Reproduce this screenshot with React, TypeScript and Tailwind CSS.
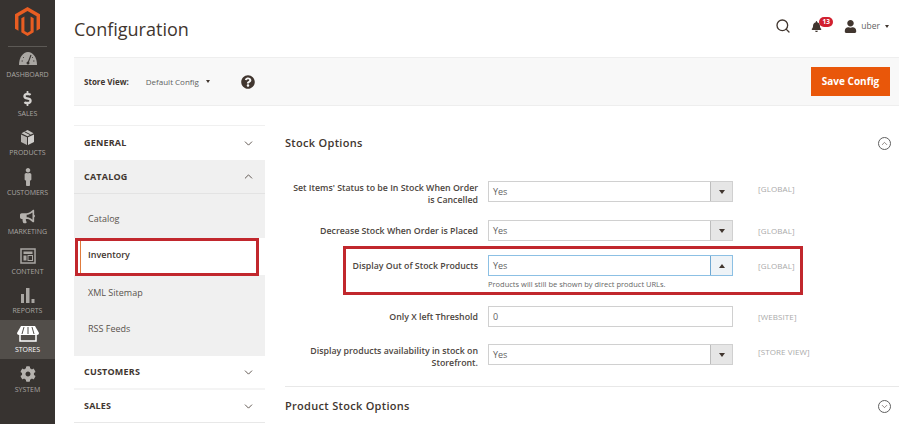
import { ChevronDown, ChevronUp, Search } from 'lucide-react'
import { FaBullhorn, FaCog, FaQuestionCircle, FaBell, FaUser, FaDollarSign, FaMale } from 'react-icons/fa'
import type { ReactNode } from 'react'

function Logo() {
  return (
    <svg width="25" height="29" viewBox="0 0 26 30" className="text-[#e85d22]">
      <path fill="currentColor" d="M13 0 26 7.5v15l-3.6 2.1V9.6L13 4.2 3.6 9.6v15L0 22.500V7.500Z" />
      <path fill="currentColor" d="M13 8 19.400 11.700v14.600L13 30 6.600 26.300V11.700l3.200-1.800v15l3.200 1.900 3.200-1.900v-15Z" />
    </svg>
  )
}

function GaugeIcon() {
  return (
    <svg width="18" height="13" viewBox="0 0 18 13">
      <path fill="#a9a6a2" d="M0 13C0 5.500 4 0 9 0s9 5.500 9 13Z" />
      <path stroke="#373330" strokeWidth="1.200" d="M9 11 12 3" />
      <circle cx="9" cy="11" r="1.500" fill="#373330" />
      <path stroke="#373330" strokeWidth="0.800" d="M4 5l1 1M2.500 9h1.500M14 5l-1 1M15.500 9H14" />
    </svg>
  )
}

function BoxIcon() {
  return (
    <svg width="15" height="15" viewBox="0 0 15 15">
      <path fill="#b5b2ae" d="M7 7.200v7.800L1 12V4.500Z" />
      <path fill="#d0cecb" d="M8 7.200v7.800l6-3V4.500Z" />
      <path fill="#c4c2be" d="M7.500 0 13.500 3.200 7.500 6.300 1.500 3.200Z" />
      <path stroke="#373330" strokeWidth="1" d="M4.500 1.700 10.500 4.800" />
    </svg>
  )
}

function ContentIcon() {
  return (
    <svg width="16" height="16" viewBox="0 0 16 16" fill="none" stroke="#a9a6a2">
      <rect x="1" y="1" width="14" height="14" strokeWidth="1.500" />
      <rect x="3.500" y="3.500" width="9" height="2.500" fill="#a9a6a2" stroke="none" />
      <rect x="3.500" y="7.500" width="3" height="5" fill="#a9a6a2" stroke="none" />
      <rect x="8" y="7.500" width="4.500" height="5" strokeWidth="1" />
    </svg>
  )
}

function ReportsIcon() {
  return (
    <svg width="15" height="15" viewBox="0 0 15 15" fill="#a9a6a2">
      <rect x="1" y="6" width="3" height="9" />
      <rect x="6" y="0" width="3.500" height="15" />
      <rect x="11.500" y="11" width="3" height="4" />
    </svg>
  )
}

function StoreIcon() {
  return (
    <svg width="22" height="16" viewBox="0 0 22 16">
      <path fill="#fff" d="M4 0h14l4 7c0 1.200-1 2-2 2H2C1 9 0 8.200 0 7Z" />
      <path stroke="#53504c" strokeWidth="1" d="M7 1 5 8M11 1v7M15 1l2 7" />
      <path fill="none" stroke="#fff" strokeWidth="1.500" d="M3 9v6h16V9" />
    </svg>
  )
}

function NavItem({ icon, label, active, iconClass }: { icon: ReactNode; label: string; active?: boolean; iconClass: string }) {
  return (
    <div className={`flex h-[39.400px] flex-col items-center justify-center ${active ? 'bg-[#524e4a] text-white' : 'text-[#a9a6a2]'}`}>
      <div className={`flex h-[20px] items-center justify-center ${iconClass}`}>{icon}</div>
      <span className="mt-[1px] text-[7px] leading-[9px] uppercase">{label}</span>
    </div>
  )
}

function Sidebar() {
  return (
    <div className="flex h-[424px] w-[55px] shrink-0 flex-col bg-[#373330]">
      <div className="flex h-[46px] items-start justify-center pt-[7px]">
        <Logo />
      </div>
      <div className="mx-[8px] h-px bg-[#5c5955]" />
      <div className="-mt-[3px]">
        <NavItem icon={<GaugeIcon />} label="Dashboard" iconClass="" />
        <NavItem icon={<FaDollarSign size={15} />} label="Sales" iconClass="text-[#d4d2cf]" />
        <NavItem icon={<BoxIcon />} label="Products" iconClass="" />
        <NavItem icon={<FaMale size={18} />} label="Customers" iconClass="text-[#b5b2ae]" />
        <NavItem icon={<FaBullhorn size={15} />} label="Marketing" iconClass="text-[#b5b2ae]" />
        <NavItem icon={<ContentIcon />} label="Content" iconClass="" />
        <NavItem icon={<ReportsIcon />} label="Reports" iconClass="" />
        <NavItem icon={<StoreIcon />} label="Stores" iconClass="" active />
        <NavItem icon={<FaCog size={16} />} label="System" iconClass="text-[#b5b2ae]" />
      </div>
    </div>
  )
}

function SectionRow({ label, open, className }: { label: string; open?: boolean; className: string }) {
  return (
    <div className={`flex items-center justify-between pr-[10px] pl-[10px] ${className}`}>
      <span className="text-[9px] font-bold tracking-[0.2px] text-[#41362f] uppercase">{label}</span>
      {open ? <ChevronUp size={13} strokeWidth={1.500} className="text-[#41362f]" /> : <ChevronDown size={13} strokeWidth={1.500} className="text-[#41362f]" />}
    </div>
  )
}

function ConfigNav() {
  return (
    <div className="relative w-[191px] shrink-0 border-t border-[#f0f0f0]">
      <SectionRow label="General" className="h-[34px] bg-white" />
      <SectionRow label="Catalog" open className="h-[34px] border-b border-[#e3e3e3] bg-[#f0f0f0]" />
      <div className="bg-[#f0f0f0] pb-[8px] text-[9px] text-[#5a534e]">
        <div className="flex h-[44px] items-center pt-[5px] pl-[14px]">Catalog</div>
        <div className="flex h-[37px] items-center bg-white pb-[3px] pl-[14px] font-semibold text-[#41362f]">Inventory</div>
        <div className="flex h-[36px] items-center pl-[14px]">XML Sitemap</div>
        <div className="flex h-[37px] items-center pb-[2px] pl-[14px]">RSS Feeds</div>
      </div>
      <SectionRow label="Customers" className="h-[34px] border-b-2 border-[#f4f4f4] bg-white" />
      <SectionRow label="Sales" className="h-[33px] border-b border-[#e8e8e8] bg-white" />
      {/* annotation drawn on the screenshot */}
      <div className="absolute top-[112px] left-[1px] h-[38px] w-[184px] border-[3px] border-[#c1272d]">
        <div className="ml-[2px] h-full w-[1px] bg-[#e07b3c]" />
      </div>
    </div>
  )
}

function Select({ value, focused }: { value: string; focused?: boolean }) {
  return (
    <div className={`flex h-[21px] w-[245px] border bg-white ${focused ? 'border-[#8cc0e4]' : 'border-[#d0d0d0]'}`}>
      <span className="flex-1 pl-[4px] text-[9px] leading-[20px] text-[#5f5f5f]">{value}</span>
      <span className={`flex w-[22px] items-center justify-center border-l ${focused ? 'border-[#6fa8d2] bg-[#eef3f7]' : 'border-[#bdbdbd] bg-[#e6e6e6]'}`}>
        <span className={`h-0 w-0 border-x-[3px] border-x-transparent ${focused ? 'border-b-[4px] border-b-[#41362f]' : 'border-t-[4px] border-t-[#41362f]'}`} />
      </span>
    </div>
  )
}

function FormRow({ label, scope, control, className, hint, tall }: { label: ReactNode; scope: string; control: ReactNode; className: string; hint?: string; tall?: boolean }) {
  return (
    <div className={`flex items-start ${className}`}>
      <div className={`w-[193px] shrink-0 text-right text-[8.800px] leading-[12px] font-semibold text-[#4d4641] ${tall ? 'pt-[1px]' : 'pt-[5px]'}`}>{label}</div>
      <div className="ml-[10px] w-[245px] shrink-0">
        {control}
        {hint && <div className="mt-[3px] text-[7.500px] leading-[10px] text-[#666]">{hint}</div>}
      </div>
      <div className={`ml-[25px] text-[8px] leading-[10px] tracking-[0.1px] text-[#aaaaaa] uppercase ${tall ? 'pt-[3px]' : 'pt-[6px]'}`}>{scope}</div>
    </div>
  )
}

export default function App() {
  return (
    <div className="flex h-[424px] w-[918px] overflow-hidden bg-white font-['Open_Sans',sans-serif]">
      <Sidebar />
      <div className="w-[844px] pl-[19px]">
        <div className="flex h-[57px] items-start justify-between">
          <h1 className="mt-[15px] text-[18px] leading-[28px] text-[#41362f]">Configuration</h1>
          <div className="mt-[18px] mr-[10px] flex items-center text-[#41362f]">
            <Search size={16} strokeWidth={2} />
            <div className="relative ml-[20px]">
              <FaBell size={11} />
              <span className="absolute -top-[4px] left-[8px] flex h-[10px] w-[14px] items-center justify-center rounded-full bg-[#d1202f] text-[6.500px] font-bold text-white">13</span>
            </div>
            <FaUser size={13} className="ml-[22px]" />
            <span className="ml-[4px] text-[8.500px] text-[#5f5f5f]">uber</span>
            <span className="ml-[5px] h-0 w-0 border-x-[2.500px] border-t-[3px] border-x-transparent border-t-[#41362f]" />
          </div>
        </div>

        <div className="flex h-[49px] w-[825px] items-center border-y border-[#eeeeee] bg-[#f8f8f8] pr-[9px] pl-[10px]">
          <span className="text-[8px] font-bold text-[#41362f]">Store View:</span>
          <span className="ml-[17px] text-[8px] text-[#5f5f5f]">Default Config</span>
          <span className="ml-[7px] h-0 w-0 border-x-[2.500px] border-t-[3px] border-x-transparent border-t-[#41362f]" />
          <FaQuestionCircle size={14} className="ml-[31px] text-[#41362f]" />
          <button className="ml-auto h-[29px] w-[79px] bg-[#e9570a] text-[10px] font-bold text-white">Save Config</button>
        </div>

        <div className="mt-[19px] flex">
          <ConfigNav />
          <div className="relative ml-[20px] w-[614px]">
            <div className="flex h-[37px] items-center justify-between pr-[8px]">
              <h2 className="text-[11px] font-semibold tracking-[0.3px] text-[#41362f]">Stock Options</h2>
              <span className="flex h-[13px] w-[13px] items-center justify-center rounded-full border border-[#5f5f5f]">
                <ChevronUp size={9} strokeWidth={1.500} className="text-[#41362f]" />
              </span>
            </div>
            <FormRow tall className="mt-[19px]" label={<>Set Items' Status to be In Stock When Order<br />is Cancelled</>} scope="[Global]" control={<Select value="Yes" />} />
            <FormRow className="mt-[14px]" label="Decrease Stock When Order is Placed" scope="[Global]" control={<Select value="Yes" />} />
            <FormRow className="mt-[14px]" label="Display Out of Stock Products" scope="[Global]" control={<Select value="Yes" focused />} hint="Products will still be shown by direct product URLs." />
            <FormRow className="mt-[17px]" label="Only X left Threshold" scope="[Website]" control={<div className="h-[21px] border border-[#d0d0d0] bg-white pl-[4px] text-[9px] leading-[20px] text-[#5f5f5f]">0</div>} />
            <FormRow tall className="mt-[17px]" label={<>Display products availability in stock on<br />Storefront.</>} scope="[Store View]" control={<Select value="Yes" />} />
            <div className="mt-[17px] h-px bg-[#e8e8e8]" />
            <div className="flex h-[38px] items-center justify-between pr-[8px]">
              <h2 className="text-[11px] font-semibold tracking-[0.3px] text-[#41362f]">Product Stock Options</h2>
              <span className="flex h-[13px] w-[13px] items-center justify-center rounded-full border border-[#5f5f5f]">
                <ChevronDown size={9} strokeWidth={1.500} className="text-[#41362f]" />
              </span>
            </div>
            {/* annotation drawn on the screenshot */}
            <div className="absolute top-[121px] left-[58px] h-[49px] w-[460px] border-[3px] border-[#c1272d]" />
          </div>
        </div>
      </div>
    </div>
  )
}
